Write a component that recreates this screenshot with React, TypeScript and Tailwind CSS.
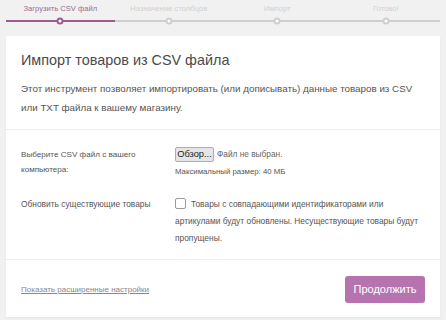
import React from "react";

const steps = [
  { label: "Загрузить CSV файл", active: true },
  { label: "Назначение столбцов", active: false },
  { label: "Импорт", active: false },
  { label: "Готово!", active: false },
];

export default function App() {
  return (
    <div
      className="w-[446px] h-[320px] overflow-hidden bg-[#f1f1f1] text-[#555]"
      style={{ fontFamily: '"Liberation Sans", Arial, sans-serif' }}
    >
      <div className="grid grid-cols-4 px-[6px] pt-[2px]">
        {steps.map((s) => (
          <div key={s.label} className="flex flex-col items-center">
            <div
              className={`h-[14px] text-[7.6px] leading-[14px] ${
                s.active ? "text-[#9a6a93]" : "text-[#d0d0d0]"
              }`}
            >
              {s.label}
            </div>
            <div
              className={`relative mt-[4px] h-[2px] w-full ${
                s.active ? "bg-[#9b5c8f]" : "bg-[#cfcfcf]"
              }`}
            >
              <span
                className={`absolute left-1/2 top-1/2 h-[7px] w-[7px] -translate-x-1/2 -translate-y-1/2 rounded-full border-2 bg-white ${
                  s.active ? "border-[#9b5c8f]" : "border-[#cfcfcf]"
                }`}
              />
            </div>
          </div>
        ))}
      </div>

      <div className="mx-[6px] mt-[14px] bg-white shadow-[0_1px_2px_rgba(0,0,0,0.06)]">
        <div className="border-b border-[#eee] px-[15px] pt-[12px] pb-[12px]">
          <h1 className="text-[14.4px] leading-[24px] text-[#4a4a4a]">
            Импорт товаров из CSV файла
          </h1>
          <p className="mt-[7px] text-[9.8px] leading-[19px] text-[#555]">
            Этот инструмент позволяет импортировать (или дописывать) данные
            товаров из CSV или TXT файла к вашему магазину.
          </p>
        </div>

        <div className="px-[15px] pt-[17px] pb-[12px] text-[8.4px] text-[#555]">
          <div className="flex">
            <div className="w-[154px] text-[8.1px] leading-[15px]">
              Выберите CSV файл с вашего
              <br />
              компьютера:
            </div>
            <div>
              <div className="flex items-center gap-[3px]">
                <span className="flex h-[15px] w-[39px] items-center justify-center rounded-[2px] border border-[#adadad] bg-[#e5e5e5] text-[9.3px] text-[#222]">
                  Обзор...
                </span>
                <span className="text-[8.3px] text-[#666]">Файл не выбран.</span>
              </div>
              <div className="mt-[4px] text-[7.8px] leading-[12px] text-[#555]">
                Максимальный размер: 40 МБ
              </div>
            </div>
          </div>

          <div className="mt-[18px] flex">
            <div className="w-[154px] leading-[17px]">Обновить существующие товары</div>
            <div className="w-[250px] leading-[17px]">
              <span className="mr-[5px] inline-block h-[11px] w-[11px] rounded-[2px] border border-[#9a9a9a] bg-white align-[-2px]" />
              Товары с совпадающими идентификаторами или артикулами будут
              обновлены. Несуществующие товары будут пропущены.
            </div>
          </div>
        </div>

        <div className="flex items-center justify-between border-t border-[#eee] px-[15px] pt-[16px] pb-[14px]">
          <a className="text-[8px] text-[#888] underline">
            Показать расширенные настройки
          </a>
          <button className="h-[27px] w-[80px] rounded-[3px] bg-[#b773b0] text-[11px] text-white">
            Продолжить
          </button>
        </div>
      </div>
    </div>
  );
}
